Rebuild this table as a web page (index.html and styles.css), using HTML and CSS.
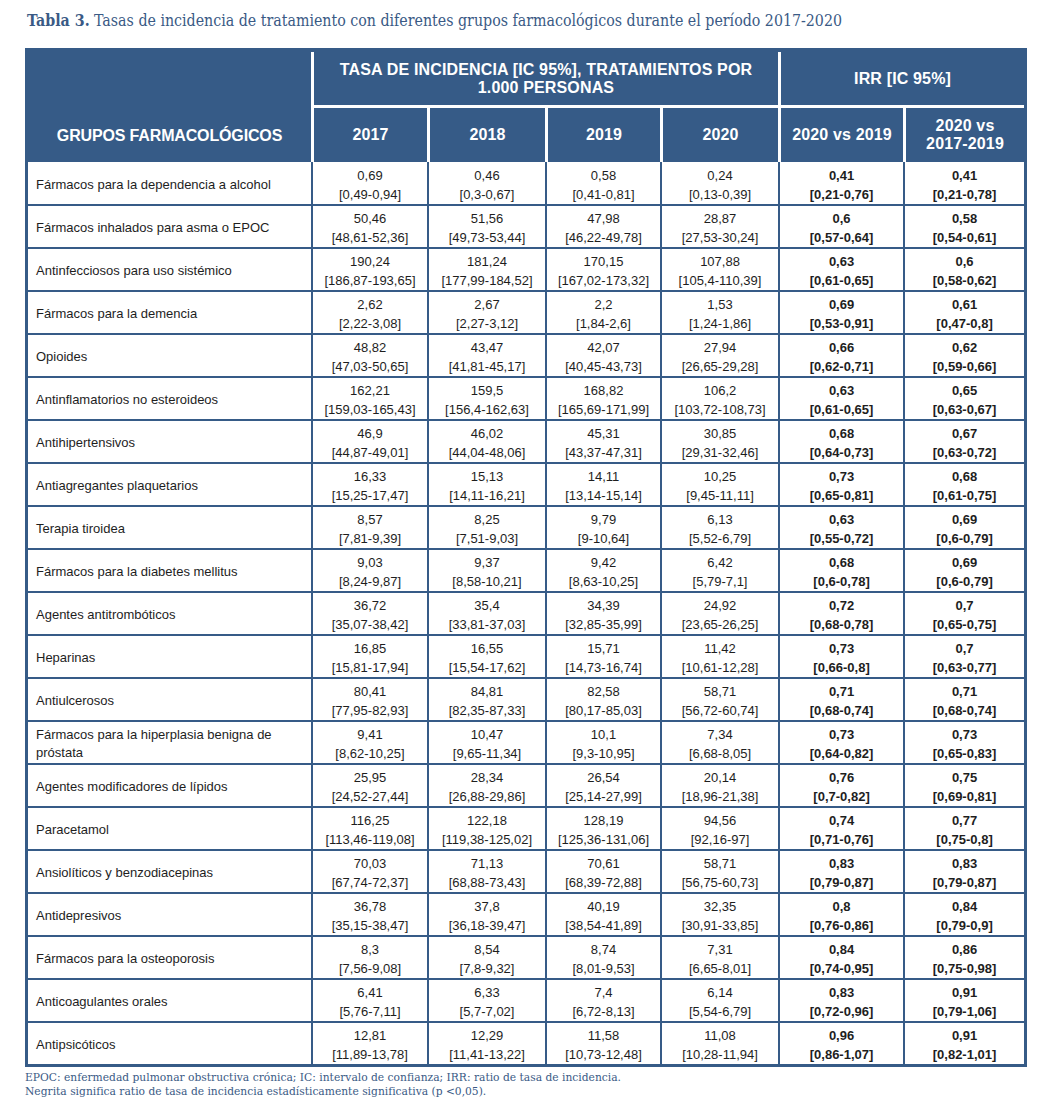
FILE: index.html
```html
<!DOCTYPE html>
<html lang="es">
<head>
<meta charset="utf-8">
<title>Tabla 3</title>
<link rel="stylesheet" href="styles.css">
</head>
<body>
<div class="page">
  <p class="title"><b>Tabla 3.</b> Tasas de incidencia de tratamiento con diferentes grupos farmacológicos durante el período 2017-2020</p>
  <table class="data">
    <colgroup>
      <col class="c-name"><col class="c-2017"><col class="c-2018"><col class="c-2019"><col class="c-2020"><col class="c-irr1"><col class="c-irr2">
    </colgroup>
    <thead>
      <tr class="h1">
        <th rowspan="2" class="first">GRUPOS FARMACOLÓGICOS</th>
        <th colspan="4">TASA DE INCIDENCIA [IC 95%], TRATAMIENTOS POR<br>1.000 PERSONAS</th>
        <th colspan="2">IRR [IC 95%]</th>
      </tr>
      <tr class="h2">
        <th>2017</th><th>2018</th><th>2019</th><th>2020</th><th>2020 vs 2019</th><th>2020 vs<br>2017-2019</th>
      </tr>
    </thead>
    <tbody>
      <tr><td>Fármacos para la dependencia a alcohol</td><td>0,69<br>[0,49-0,94]</td><td>0,46<br>[0,3-0,67]</td><td>0,58<br>[0,41-0,81]</td><td>0,24<br>[0,13-0,39]</td><td class="b">0,41<br>[0,21-0,76]</td><td class="b">0,41<br>[0,21-0,78]</td></tr>
      <tr><td>Fármacos inhalados para asma o EPOC</td><td>50,46<br>[48,61-52,36]</td><td>51,56<br>[49,73-53,44]</td><td>47,98<br>[46,22-49,78]</td><td>28,87<br>[27,53-30,24]</td><td class="b">0,6<br>[0,57-0,64]</td><td class="b">0,58<br>[0,54-0,61]</td></tr>
      <tr><td>Antinfecciosos para uso sistémico</td><td>190,24<br>[186,87-193,65]</td><td>181,24<br>[177,99-184,52]</td><td>170,15<br>[167,02-173,32]</td><td>107,88<br>[105,4-110,39]</td><td class="b">0,63<br>[0,61-0,65]</td><td class="b">0,6<br>[0,58-0,62]</td></tr>
      <tr><td>Fármacos para la demencia</td><td>2,62<br>[2,22-3,08]</td><td>2,67<br>[2,27-3,12]</td><td>2,2<br>[1,84-2,6]</td><td>1,53<br>[1,24-1,86]</td><td class="b">0,69<br>[0,53-0,91]</td><td class="b">0,61<br>[0,47-0,8]</td></tr>
      <tr><td>Opioides</td><td>48,82<br>[47,03-50,65]</td><td>43,47<br>[41,81-45,17]</td><td>42,07<br>[40,45-43,73]</td><td>27,94<br>[26,65-29,28]</td><td class="b">0,66<br>[0,62-0,71]</td><td class="b">0,62<br>[0,59-0,66]</td></tr>
      <tr><td>Antinflamatorios no esteroideos</td><td>162,21<br>[159,03-165,43]</td><td>159,5<br>[156,4-162,63]</td><td>168,82<br>[165,69-171,99]</td><td>106,2<br>[103,72-108,73]</td><td class="b">0,63<br>[0,61-0,65]</td><td class="b">0,65<br>[0,63-0,67]</td></tr>
      <tr><td>Antihipertensivos</td><td>46,9<br>[44,87-49,01]</td><td>46,02<br>[44,04-48,06]</td><td>45,31<br>[43,37-47,31]</td><td>30,85<br>[29,31-32,46]</td><td class="b">0,68<br>[0,64-0,73]</td><td class="b">0,67<br>[0,63-0,72]</td></tr>
      <tr><td>Antiagregantes plaquetarios</td><td>16,33<br>[15,25-17,47]</td><td>15,13<br>[14,11-16,21]</td><td>14,11<br>[13,14-15,14]</td><td>10,25<br>[9,45-11,11]</td><td class="b">0,73<br>[0,65-0,81]</td><td class="b">0,68<br>[0,61-0,75]</td></tr>
      <tr><td>Terapia tiroidea</td><td>8,57<br>[7,81-9,39]</td><td>8,25<br>[7,51-9,03]</td><td>9,79<br>[9-10,64]</td><td>6,13<br>[5,52-6,79]</td><td class="b">0,63<br>[0,55-0,72]</td><td class="b">0,69<br>[0,6-0,79]</td></tr>
      <tr><td>Fármacos para la diabetes mellitus</td><td>9,03<br>[8,24-9,87]</td><td>9,37<br>[8,58-10,21]</td><td>9,42<br>[8,63-10,25]</td><td>6,42<br>[5,79-7,1]</td><td class="b">0,68<br>[0,6-0,78]</td><td class="b">0,69<br>[0,6-0,79]</td></tr>
      <tr><td>Agentes antitrombóticos</td><td>36,72<br>[35,07-38,42]</td><td>35,4<br>[33,81-37,03]</td><td>34,39<br>[32,85-35,99]</td><td>24,92<br>[23,65-26,25]</td><td class="b">0,72<br>[0,68-0,78]</td><td class="b">0,7<br>[0,65-0,75]</td></tr>
      <tr><td>Heparinas</td><td>16,85<br>[15,81-17,94]</td><td>16,55<br>[15,54-17,62]</td><td>15,71<br>[14,73-16,74]</td><td>11,42<br>[10,61-12,28]</td><td class="b">0,73<br>[0,66-0,8]</td><td class="b">0,7<br>[0,63-0,77]</td></tr>
      <tr><td>Antiulcerosos</td><td>80,41<br>[77,95-82,93]</td><td>84,81<br>[82,35-87,33]</td><td>82,58<br>[80,17-85,03]</td><td>58,71<br>[56,72-60,74]</td><td class="b">0,71<br>[0,68-0,74]</td><td class="b">0,71<br>[0,68-0,74]</td></tr>
      <tr><td>Fármacos para la hiperplasia benigna de próstata</td><td>9,41<br>[8,62-10,25]</td><td>10,47<br>[9,65-11,34]</td><td>10,1<br>[9,3-10,95]</td><td>7,34<br>[6,68-8,05]</td><td class="b">0,73<br>[0,64-0,82]</td><td class="b">0,73<br>[0,65-0,83]</td></tr>
      <tr><td>Agentes modificadores de lípidos</td><td>25,95<br>[24,52-27,44]</td><td>28,34<br>[26,88-29,86]</td><td>26,54<br>[25,14-27,99]</td><td>20,14<br>[18,96-21,38]</td><td class="b">0,76<br>[0,7-0,82]</td><td class="b">0,75<br>[0,69-0,81]</td></tr>
      <tr><td>Paracetamol</td><td>116,25<br>[113,46-119,08]</td><td>122,18<br>[119,38-125,02]</td><td>128,19<br>[125,36-131,06]</td><td>94,56<br>[92,16-97]</td><td class="b">0,74<br>[0,71-0,76]</td><td class="b">0,77<br>[0,75-0,8]</td></tr>
      <tr><td>Ansiolíticos y benzodiacepinas</td><td>70,03<br>[67,74-72,37]</td><td>71,13<br>[68,88-73,43]</td><td>70,61<br>[68,39-72,88]</td><td>58,71<br>[56,75-60,73]</td><td class="b">0,83<br>[0,79-0,87]</td><td class="b">0,83<br>[0,79-0,87]</td></tr>
      <tr><td>Antidepresivos</td><td>36,78<br>[35,15-38,47]</td><td>37,8<br>[36,18-39,47]</td><td>40,19<br>[38,54-41,89]</td><td>32,35<br>[30,91-33,85]</td><td class="b">0,8<br>[0,76-0,86]</td><td class="b">0,84<br>[0,79-0,9]</td></tr>
      <tr><td>Fármacos para la osteoporosis</td><td>8,3<br>[7,56-9,08]</td><td>8,54<br>[7,8-9,32]</td><td>8,74<br>[8,01-9,53]</td><td>7,31<br>[6,65-8,01]</td><td class="b">0,84<br>[0,74-0,95]</td><td class="b">0,86<br>[0,75-0,98]</td></tr>
      <tr><td>Anticoagulantes orales</td><td>6,41<br>[5,76-7,11]</td><td>6,33<br>[5,7-7,02]</td><td>7,4<br>[6,72-8,13]</td><td>6,14<br>[5,54-6,79]</td><td class="b">0,83<br>[0,72-0,96]</td><td class="b">0,91<br>[0,79-1,06]</td></tr>
      <tr><td>Antipsicóticos</td><td>12,81<br>[11,89-13,78]</td><td>12,29<br>[11,41-13,22]</td><td>11,58<br>[10,73-12,48]</td><td>11,08<br>[10,28-11,94]</td><td class="b">0,96<br>[0,86-1,07]</td><td class="b">0,91<br>[0,82-1,01]</td></tr>
    </tbody>
  </table>
  <p class="note">EPOC: enfermedad pulmonar obstructiva crónica; IC: intervalo de confianza; IRR: ratio de tasa de incidencia.<br>Negrita significa ratio de tasa de incidencia estadísticamente significativa (p &lt;0,05).</p>
</div>
</body>
</html>
```
FILE: styles.css
```css
html, body {
  margin: 0;
  padding: 0;
  background: #ffffff;
}

.page {
  padding: 11px 0 0 25px;
  width: 1002px;
}

.title {
  margin: 0 0 17px 2px;
  font-family: "DejaVu Serif", "Liberation Serif", serif;
  font-stretch: condensed;
  font-size: 15.8px;
  line-height: 20px;
  color: #3a5a85;
  white-space: nowrap;
}

.title b {
  font-weight: bold;
}

.data {
  width: 1002px;
  table-layout: fixed;
  border-collapse: separate;
  border-spacing: 0;
  border: 3px solid #365b87;
  border-top-width: 4px;
  font-family: "Liberation Sans", Arial, sans-serif;
  color: #1e1e1e;
}

.c-name { width: 283px; }
.c-2017 { width: 116px; }
.c-2018 { width: 118px; }
.c-2019 { width: 115px; }
.c-2020 { width: 118px; }
.c-irr1 { width: 125px; }
.c-irr2 { width: 121px; }

.data th {
  background: #365b87;
  color: #ffffff;
  font-weight: bold;
  font-size: 16px;
  letter-spacing: 0.15px;
  line-height: 18px;
  text-align: center;
  vertical-align: middle;
  padding: 0 2px;
  border-left: 3px solid #ffffff;
}

.data th.first {
  border-left: none;
  vertical-align: bottom;
  padding-bottom: 17px;
  letter-spacing: -0.15px;
}

.data .h1 th {
  height: 53px;
}

.data .h2 th {
  height: 54px;
  border-top: 3px solid #ffffff;
}

.data .h2 th:first-child {
  border-left: 3px solid #ffffff;
}

.data td {
  font-size: 13px;
  line-height: 19px;
  height: 43px;
  padding: 3px 4px 0;
  text-align: center;
  vertical-align: middle;
  border-left: 2px solid #365b87;
  border-top: 2px solid #365b87;
  box-sizing: border-box;
}

.data td:first-child {
  border-left: none;
  text-align: left;
  padding-left: 8px;
  line-height: 18px;
}

.data tbody tr:first-child td {
  border-top: none;
  height: 42px;
}

.data td.b {
  font-weight: bold;
}

.note {
  margin: 3px 0 0 0;
  font-family: "DejaVu Serif", "Liberation Serif", serif;
  font-stretch: condensed;
  font-size: 11.9px;
  line-height: 14px;
  color: #3a5a85;
  white-space: nowrap;
}
```
